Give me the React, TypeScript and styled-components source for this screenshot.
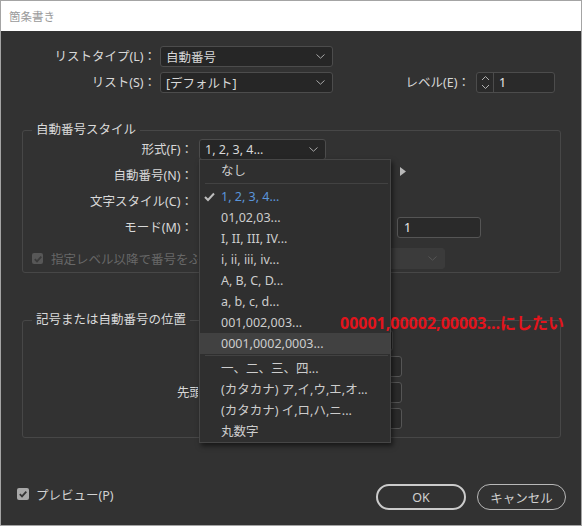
import React from "react";
import styled, { createGlobalStyle } from "styled-components";

const FONT = `"Noto Sans", "Noto Sans CJK JP", sans-serif`;

const Global = createGlobalStyle`
  html, body { margin: 0; padding: 0; background: #323232; }
  * { box-sizing: border-box; }
`;

const Window = styled.div`
  position: relative;
  width: 582px;
  height: 526px;
  border: 1px solid #a4a4a4;
  background: #323232;
  font-family: ${FONT};
  font-size: 12.5px;
  color: #d4d4d4;
  display: flex;
  flex-direction: column;
  overflow: hidden;
`;

const TitleBar = styled.div`
  height: 30px;
  flex: none;
  background: #ffffff;
  color: #9a9a9a;
  font-size: 11.5px;
  display: flex;
  align-items: center;
  padding-left: 8px;
`;

const Body = styled.div`
  flex: 1;
  display: flex;
  flex-direction: column;
  padding-top: 15px;
`;

const Rows = styled.div<{ $gap: number }>`
  display: flex;
  flex-direction: column;
  gap: ${(p) => p.$gap}px;
`;

const Row = styled.div<{ $pl?: number; $mt?: number }>`
  display: flex;
  align-items: center;
  height: 21px;
  padding-left: ${(p) => p.$pl ?? 0}px;
  margin-top: ${(p) => p.$mt ?? 0}px;
`;

const Label = styled.div<{ $w: number; $mr: number }>`
  width: ${(p) => p.$w}px;
  margin-right: ${(p) => p.$mr}px;
  flex: none;
  text-align: right;
  white-space: nowrap;
  color: #d8d8d8;
  line-height: 21px;
`;

/* label whose end is covered by the open menu: clipped at the menu edge */
const ClipLabel = styled.div<{ $w: number; $indent: number }>`
  width: ${(p) => p.$w}px;
  flex: none;
  padding-left: ${(p) => p.$indent}px;
  overflow: hidden;
  white-space: nowrap;
  color: #d8d8d8;
  line-height: 21px;
`;

const Spacer = styled.div<{ $w: number }>`
  width: ${(p) => p.$w}px;
  flex: none;
`;

const SelectBox = styled.div<{ $w: number; $disabled?: boolean; $ml?: string; $mr?: number }>`
  width: ${(p) => p.$w}px;
  height: 21px;
  flex: none;
  display: flex;
  align-items: center;
  justify-content: space-between;
  padding: 0 7px 0 5px;
  margin-left: ${(p) => p.$ml ?? "0"};
  margin-right: ${(p) => p.$mr ?? 0}px;
  border: 1px solid ${(p) => (p.$disabled ? "#3b3b3b" : "#4c4c4c")};
  border-radius: 3px;
  background: ${(p) => (p.$disabled ? "#3b3b3b" : "#262626")};
  color: #d8d8d8;
  white-space: nowrap;
`;

const TextField = styled.div<{ $w: number; $ml?: number }>`
  width: ${(p) => p.$w}px;
  height: 21px;
  flex: none;
  display: flex;
  align-items: center;
  padding-left: 6px;
  margin-left: ${(p) => p.$ml ?? 0}px;
  border: 1px solid #555555;
  border-radius: 3px;
  background: #2a2a2a;
  color: #e8e8e8;
`;

const Spinner = styled.div<{ $w: number }>`
  width: ${(p) => p.$w}px;
  height: 21px;
  flex: none;
  display: flex;
  align-items: stretch;
  border: 1px solid #4c4c4c;
  border-radius: 3px;
  background: #2a2a2a;
  color: #e8e8e8;
`;

const SpinArrows = styled.div`
  width: 17px;
  flex: none;
  border-right: 1px solid #4c4c4c;
  display: flex;
  align-items: center;
  justify-content: center;
`;

const SpinValue = styled.div`
  display: flex;
  align-items: center;
  padding-left: 5px;
`;

const Group = styled.fieldset<{ $mt: number; $pb: number }>`
  margin: ${(p) => p.$mt}px 20px 0 21px;
  padding: 0 0 ${(p) => p.$pb}px 0;
  border: 1px solid #474747;
  border-radius: 3px;
  min-width: 0;
`;

const Legend = styled.legend`
  margin-left: 9px;
  padding: 0 4px;
  line-height: 18px;
  font-size: 12.5px;
  color: #dadada;
`;

const Anchor = styled.div`
  position: relative;
  flex: none;
`;

const Menu = styled.div`
  position: absolute;
  top: 20px;
  left: 0;
  z-index: 10;
  width: 192px;
  background: #2f2f2f;
  border: 1px solid #464646;
  box-shadow: 2px 3px 5px rgba(0, 0, 0, 0.55);
`;

const MenuItem = styled.div<{ $selected?: boolean; $hover?: boolean }>`
  position: relative;
  height: 21px;
  line-height: 21px;
  padding-left: 21px;
  color: ${(p) => (p.$selected ? "#5a95da" : "#cdcdcd")};
  background: ${(p) => (p.$hover ? "#414141" : "transparent")};
  white-space: nowrap;
`;

const MenuSep = styled.div<{ $mt: number; $mb: number }>`
  height: 1px;
  margin: ${(p) => p.$mt}px 2px ${(p) => p.$mb}px 5px;
  background: #424242;
`;

const CheckMark = styled.svg`
  position: absolute;
  left: 4px;
  top: 6px;
`;

const Triangle = styled.svg`
  flex: none;
  margin-left: 21px;
  margin-bottom: 9px;
`;

const CheckBox = styled.div<{ $disabled?: boolean; $size: number }>`
  width: ${(p) => p.$size}px;
  height: ${(p) => p.$size}px;
  flex: none;
  border-radius: 2px;
  background: ${(p) => (p.$disabled ? "#575757" : "#a8a8a8")};
  display: flex;
  align-items: center;
  justify-content: center;
`;

const CheckText = styled.span<{ $disabled?: boolean; $ml: number; $maxW?: number }>`
  margin-left: ${(p) => p.$ml}px;
  max-width: ${(p) => (p.$maxW ? `${p.$maxW}px` : "none")};
  overflow: hidden;
  color: ${(p) => (p.$disabled ? "#686868" : "#d2d2d2")};
  white-space: nowrap;
`;

const Annotation = styled.div`
  position: absolute;
  left: 339px;
  top: 312px;
  z-index: 20;
  line-height: 20px;
  font-size: 16px;
  font-weight: 700;
  color: #e3141c;
  white-space: nowrap;
`;

const Footer = styled.div`
  margin-top: auto;
  display: flex;
  align-items: flex-start;
  padding: 0 15px 15px 16px;
`;

const PreviewCheck = styled.div`
  display: flex;
  align-items: center;
  height: 12px;
  margin-top: 4px;
`;

const Buttons = styled.div`
  margin-left: auto;
  display: flex;
  gap: 11px;
`;

const PillButton = styled.button<{ $w: number; $primary?: boolean }>`
  width: ${(p) => p.$w}px;
  height: 26px;
  border-radius: 13px;
  border: ${(p) => (p.$primary ? "2px solid #cbcbcb" : "1.5px solid #b8b8b8")};
  background: transparent;
  color: #d0d0d0;
  font-family: ${FONT};
  font-size: 12.5px;
  padding: 0;
`;

const Chevron = ({ color = "#a8a8a8" }: { color?: string }) => (
  <svg width="9" height="5" viewBox="0 0 9 5">
    <path d="M0.5 0.5 L4.5 4.2 L8.5 0.5" fill="none" stroke={color} strokeWidth="1" />
  </svg>
);

const SpinIcon = () => (
  <svg width="9" height="15" viewBox="0 0 9 15">
    <path d="M1 5 L4.5 1.5 L8 5" fill="none" stroke="#b0b0b0" strokeWidth="1" />
    <path d="M1 10 L4.5 13.5 L8 10" fill="none" stroke="#b0b0b0" strokeWidth="1" />
  </svg>
);

const Tick = ({ color, size }: { color: string; size: number }) => (
  <svg width={size} height={size} viewBox="0 0 10 10">
    <path d="M1.8 5.2 L4 7.4 L8.3 2.6" fill="none" stroke={color} strokeWidth="1.8" />
  </svg>
);

const formats = [
  "01,02,03...",
  "I, II, III, IV...",
  "i, ii, iii, iv...",
  "A, B, C, D...",
  "a, b, c, d...",
  "001,002,003...",
];

const formats2 = [
  "一、二、三、四...",
  "(カタカナ) ア,イ,ウ,エ,オ...",
  "(カタカナ) イ,ロ,ハ,ニ...",
  "丸数字",
];

export default function App() {
  return (
    <>
      <Global />
      <Window>
        <TitleBar>箇条書き</TitleBar>
        <Body>
          <Rows $gap={5}>
            <Row>
              <Label $w={155} $mr={4}>リストタイプ(L)：</Label>
              <SelectBox $w={173}>
                <span>自動番号</span>
                <Chevron />
              </SelectBox>
            </Row>
            <Row>
              <Label $w={155} $mr={4}>リスト(S)：</Label>
              <SelectBox $w={173}>
                <span>[デフォルト]</span>
                <Chevron />
              </SelectBox>
              <Label $w={137} $mr={6}>レベル(E)：</Label>
              <Spinner $w={79}>
                <SpinArrows>
                  <SpinIcon />
                </SpinArrows>
                <SpinValue>1</SpinValue>
              </Spinner>
            </Row>
          </Rows>

          <Group $mt={28} $pb={3}>
            <Legend>自動番号スタイル</Legend>
            <Rows $gap={5}>
              <Row>
                <Label $w={170} $mr={6}>形式(F)：</Label>
                <Anchor>
                  <SelectBox $w={127}>
                    <span>1, 2, 3, 4...</span>
                    <Chevron />
                  </SelectBox>
                  <Menu>
                    <MenuItem>なし</MenuItem>
                    <MenuSep $mt={2} $mb={2} />
                    <MenuItem $selected>
                      <CheckMark width="11" height="10" viewBox="0 0 11 10">
                        <path d="M1 5 L4 8 L10 1.5" fill="none" stroke="#bdbdbd" strokeWidth="2" />
                      </CheckMark>
                      1, 2, 3, 4...
                    </MenuItem>
                    {formats.map((f) => (
                      <MenuItem key={f}>{f}</MenuItem>
                    ))}
                    <MenuItem $hover>0001,0002,0003...</MenuItem>
                    <MenuSep $mt={1} $mb={2} />
                    {formats2.map((f) => (
                      <MenuItem key={f}>{f}</MenuItem>
                    ))}
                  </Menu>
                </Anchor>
              </Row>
              <Row>
                <Label $w={170} $mr={6}>自動番号(N)：</Label>
                <TextField $w={180} />
                <Triangle width="6" height="9" viewBox="0 0 6 9">
                  <polygon points="0,0 6,4.5 0,9" fill="#b8b8b8" />
                </Triangle>
              </Row>
              <Row>
                <Label $w={170} $mr={6}>文字スタイル(C)：</Label>
                <SelectBox $w={180}>
                  <span />
                  <Chevron />
                </SelectBox>
              </Row>
              <Row>
                <Label $w={170} $mr={6}>モード(M)：</Label>
                <SelectBox $w={192}>
                  <span />
                  <Chevron />
                </SelectBox>
                <TextField $w={84} $ml={6}>1</TextField>
              </Row>
              <Row $pl={9} $mt={5}>
                <CheckBox $disabled $size={11}>
                  <Tick color="#3a3a3a" size={10} />
                </CheckBox>
                <CheckText $disabled $ml={8} $maxW={147}>指定レベル以降で番号をふり直す(T)：</CheckText>
                <SelectBox $w={150} $disabled $ml="auto" $mr={115}>
                  <span />
                  <Chevron color="#565656" />
                </SelectBox>
              </Row>
            </Rows>
          </Group>

          <Group $mt={38} $pb={8}>
            <Legend>記号または自動番号の位置</Legend>
            <Rows $gap={5}>
              <Row $mt={1}>
                <Spacer $w={288} />
                <SelectBox $w={82}>
                  <span />
                  <Chevron />
                </SelectBox>
              </Row>
              <Row>
                <Spacer $w={288} />
                <TextField $w={91} />
              </Row>
              <Row>
                <ClipLabel $w={175} $indent={154}>先頭行インデント(R)：</ClipLabel>
                <Spacer $w={113} />
                <TextField $w={91} />
              </Row>
              <Row>
                <Spacer $w={288} />
                <TextField $w={91} />
              </Row>
            </Rows>
          </Group>

          <Footer>
            <PreviewCheck>
              <CheckBox $size={12}>
                <Tick color="#353535" size={10} />
              </CheckBox>
              <CheckText $ml={7}>プレビュー(P)</CheckText>
            </PreviewCheck>
            <Buttons>
              <PillButton $w={90} $primary>OK</PillButton>
              <PillButton $w={89}>キャンセル</PillButton>
            </Buttons>
          </Footer>
        </Body>
        <Annotation>00001,00002,00003...にしたい</Annotation>
      </Window>
    </>
  );
}
